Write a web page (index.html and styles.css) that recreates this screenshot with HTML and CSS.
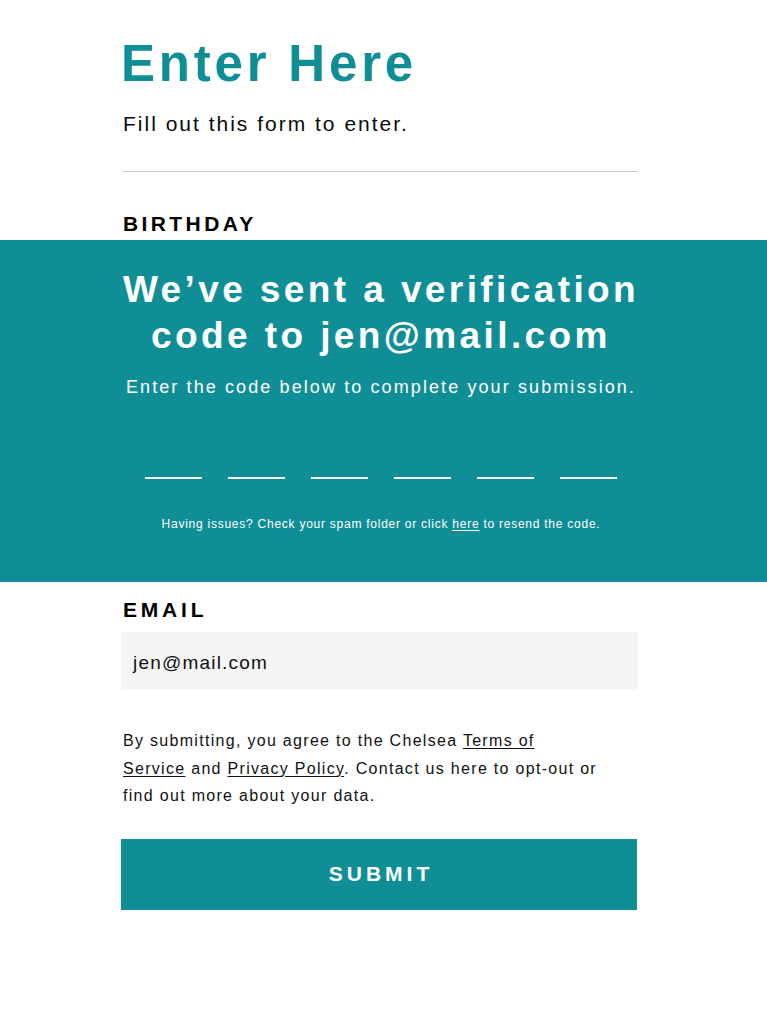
FILE: index.html
```html
<!DOCTYPE html>
<html lang="en">
<head>
<meta charset="utf-8">
<title>Enter Here</title>
<link rel="stylesheet" href="styles.css">
</head>
<body>
<main class="page">
  <header class="wrap intro">
    <h1 class="title">Enter Here</h1>
    <p class="lead">Fill out this form to enter.</p>
    <hr class="rule">
    <div class="label label-birthday">BIRTHDAY</div>
  </header>

  <section class="verify">
    <div class="verify-inner">
      <h2 class="verify-title">We’ve sent a verification code to jen@mail.com</h2>
      <p class="verify-sub">Enter the code below to complete your submission.</p>
      <div class="code-row">
        <span class="code-slot"></span>
        <span class="code-slot"></span>
        <span class="code-slot"></span>
        <span class="code-slot"></span>
        <span class="code-slot"></span>
        <span class="code-slot"></span>
      </div>
      <p class="verify-help">Having issues? Check your spam folder or click <a href="#" class="link">here</a> to resend the code.</p>
    </div>
  </section>

  <section class="wrap form-bottom">
    <div class="label label-email">EMAIL</div>
    <div class="input">jen@mail.com</div>
    <p class="legal">By submitting, you agree to the Chelsea <a href="#" class="link">Terms of Service</a> and <a href="#" class="link">Privacy Policy</a>. Contact us here to opt-out or find out more about your data.</p>
    <button class="submit" type="button">SUBMIT</button>
  </section>
</main>
</body>
</html>
```

FILE: styles.css
```css
* {
  box-sizing: border-box;
}

html, body {
  margin: 0;
  padding: 0;
  background: #ffffff;
}

body {
  font-family: "Liberation Sans", Arial, sans-serif;
  color: #0a0a0a;
}

.wrap {
  width: 517px;
  margin-left: 121px;
}

.intro {
  padding-top: 34px;
}

.title {
  margin: 0;
  font-size: 51px;
  line-height: 60px;
  font-weight: 700;
  color: #108e96;
  letter-spacing: 3.8px;
}

.lead {
  margin: 17px 0 0;
  font-size: 21px;
  line-height: 26px;
  letter-spacing: 2px;
  padding-left: 2px;
}

.rule {
  margin: 34px 0 0 2px;
  border: 0;
  border-top: 1px solid #c8c8c8;
  height: 0;
}

.label {
  font-size: 21px;
  line-height: 26px;
  font-weight: 700;
  letter-spacing: 3.4px;
  padding-left: 2px;
  color: #000;
}

.label-birthday {
  margin-top: 39px;
}

.verify {
  margin-top: 3px;
  background: #108e96;
  color: #ffffff;
  padding: 27px 0 50px;
}

.verify-inner {
  width: 560px;
  margin-left: 101px;
  text-align: center;
}

.verify-title {
  margin: 0;
  font-size: 37px;
  line-height: 46px;
  font-weight: 700;
  letter-spacing: 3.4px;
}

.verify-sub {
  margin: 16px 0 0;
  font-size: 18px;
  line-height: 24px;
  letter-spacing: 2.1px;
}

.code-row {
  margin-top: 78px;
  display: flex;
  justify-content: center;
  gap: 26px;
}

.code-slot {
  width: 57px;
  height: 2px;
  background: #ffffff;
}

.verify-help {
  margin: 37px 0 0;
  font-size: 12px;
  line-height: 16px;
  letter-spacing: 0.75px;
}

.link {
  color: inherit;
  text-decoration: underline;
  text-underline-offset: 2px;
  text-decoration-thickness: 1px;
}

.label-email {
  margin-top: 15px;
  letter-spacing: 3.8px;
}

.input {
  margin-top: 9px;
  height: 58px;
  background: #f5f5f5;
  display: flex;
  align-items: center;
  padding: 4px 0 0 12px;
  font-size: 19px;
  letter-spacing: 1.2px;
  color: #111;
}

.legal {
  margin: 37px 0 0;
  max-width: 479px;
  font-size: 16px;
  line-height: 27.5px;
  letter-spacing: 1.3px;
  color: #111;
  padding-left: 2px;
}

.submit {
  display: block;
  margin-top: 29px;
  width: 516px;
  height: 71px;
  border: 0;
  background: #108e96;
  color: #ffffff;
  font-family: "Liberation Sans", Arial, sans-serif;
  font-size: 21px;
  font-weight: 700;
  letter-spacing: 4px;
  padding: 0 0 0 4px;
  cursor: pointer;
}
```
